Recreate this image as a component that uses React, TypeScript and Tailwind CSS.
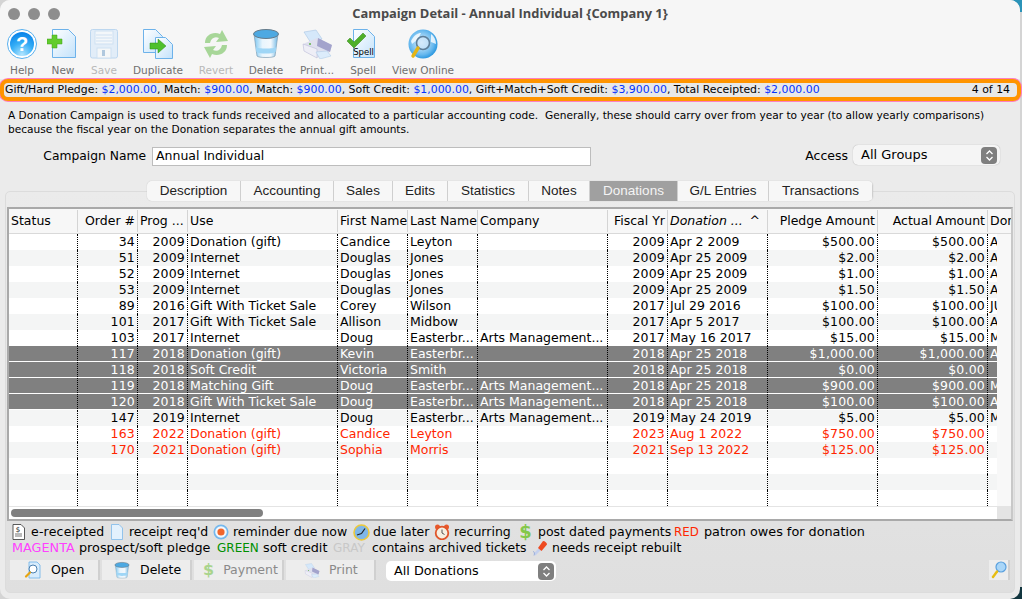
import { ReactNode } from "react";

const sans = "font-['DejaVu_Sans',sans-serif]";

type Row = {
  order: string;
  prog: string;
  use: string;
  first: string;
  last: string;
  company: string;
  fiscal: string;
  date: string;
  pledge: string;
  actual: string;
  don: string;
  selected?: boolean;
  red?: boolean;
};

const arts = "Arts Management...";

const rows: Row[] = [
  { order: "34", prog: "2009", use: "Donation (gift)", first: "Candice", last: "Leyton", company: "", fiscal: "2009", date: "Apr 2 2009", pledge: "$500.00", actual: "$500.00", don: "A" },
  { order: "51", prog: "2009", use: "Internet", first: "Douglas", last: "Jones", company: "", fiscal: "2009", date: "Apr 25 2009", pledge: "$2.00", actual: "$2.00", don: "A" },
  { order: "52", prog: "2009", use: "Internet", first: "Douglas", last: "Jones", company: "", fiscal: "2009", date: "Apr 25 2009", pledge: "$1.00", actual: "$1.00", don: "A" },
  { order: "53", prog: "2009", use: "Internet", first: "Douglas", last: "Jones", company: "", fiscal: "2009", date: "Apr 25 2009", pledge: "$1.50", actual: "$1.50", don: "A" },
  { order: "89", prog: "2016", use: "Gift With Ticket Sale", first: "Corey", last: "Wilson", company: "", fiscal: "2017", date: "Jul 29 2016", pledge: "$100.00", actual: "$100.00", don: "JU" },
  { order: "101", prog: "2017", use: "Gift With Ticket Sale", first: "Allison", last: "Midbow", company: "", fiscal: "2017", date: "Apr 5 2017", pledge: "$100.00", actual: "$100.00", don: "A" },
  { order: "103", prog: "2017", use: "Internet", first: "Doug", last: "Easterbr...", company: arts, fiscal: "2017", date: "May 16 2017", pledge: "$15.00", actual: "$15.00", don: "M" },
  { order: "117", prog: "2018", use: "Donation (gift)", first: "Kevin", last: "Easterbr...", company: "", fiscal: "2018", date: "Apr 25 2018", pledge: "$1,000.00", actual: "$1,000.00", don: "A", selected: true },
  { order: "118", prog: "2018", use: "Soft Credit", first: "Victoria", last: "Smith", company: "", fiscal: "2018", date: "Apr 25 2018", pledge: "$0.00", actual: "$0.00", don: "", selected: true },
  { order: "119", prog: "2018", use: "Matching Gift", first: "Doug", last: "Easterbr...", company: arts, fiscal: "2018", date: "Apr 25 2018", pledge: "$900.00", actual: "$900.00", don: "M", selected: true },
  { order: "120", prog: "2018", use: "Gift With Ticket Sale", first: "Doug", last: "Easterbr...", company: arts, fiscal: "2018", date: "Apr 25 2018", pledge: "$100.00", actual: "$100.00", don: "A", selected: true },
  { order: "147", prog: "2019", use: "Internet", first: "Doug", last: "Easterbr...", company: arts, fiscal: "2019", date: "May 24 2019", pledge: "$5.00", actual: "$5.00", don: "M" },
  { order: "163", prog: "2022", use: "Donation (gift)", first: "Candice", last: "Leyton", company: "", fiscal: "2023", date: "Aug 1 2022", pledge: "$750.00", actual: "$750.00", don: "", red: true },
  { order: "170", prog: "2021", use: "Donation (gift)", first: "Sophia", last: "Morris", company: "", fiscal: "2021", date: "Sep 13 2022", pledge: "$125.00", actual: "$125.00", don: "", red: true },
];

function Cell({ w, right, children, last }: { w: string; right?: boolean; children?: ReactNode; last?: boolean }) {
  return (
    <div
      className={`${w} h-full shrink-0 overflow-hidden whitespace-nowrap ${last ? "pl-[2px]" : "pl-[2px] pr-[2px]"} ${
        right ? "text-right tracking-[0.2px]" : "text-left"
      } ${last ? "" : "border-r border-dotted border-black"}`}
    >
      {children}
    </div>
  );
}

function HeadCell({ w, right, children, italic }: { w: string; right?: boolean; children?: ReactNode; italic?: boolean }) {
  return (
    <div
      className={`${w} h-[22px] shrink-0 overflow-hidden whitespace-nowrap border-r border-[#d4d4d4] px-[2px] leading-[22px] ${right ? "text-right" : ""} ${
        italic ? "italic" : ""
      }`}
    >
      {children}
    </div>
  );
}

function TableRow({ row, index }: { row?: Row; index: number }) {
  const tint = index % 2 === 1;
  let color = tint ? "bg-[#f4f5f5] text-black" : "bg-white text-black";
  if (row?.selected) color = "bg-[#808080] text-white border-b border-white";
  if (row?.red) color = `${tint ? "bg-[#f4f5f5]" : "bg-white"} text-[#ff2600]`;
  return (
    <div className={`flex h-4 leading-[16px] ${color}`}>
      <Cell w="w-[69px]" />
      <Cell w="w-[60px]" right>{row?.order}</Cell>
      <Cell w="w-[50px]" right>{row?.prog}</Cell>
      <Cell w="w-[150px]">{row?.use}</Cell>
      <Cell w="w-[70px]">{row?.first}</Cell>
      <Cell w="w-[70px]">{row?.last}</Cell>
      <Cell w="w-[130px]">{row?.company}</Cell>
      <Cell w="w-[60px]" right>{row?.fiscal}</Cell>
      <Cell w="w-[100px]">{row?.date}</Cell>
      <Cell w="w-[110px]" right>{row?.pledge}</Cell>
      <Cell w="w-[110px]" right>{row?.actual}</Cell>
      <Cell w="w-[9px]" last>{row?.don}</Cell>
    </div>
  );
}

function HelpIcon() {
  return (
    <svg width="32" height="32" viewBox="0 0 32 32">
      <defs>
        <radialGradient id="hb" cx="50%" cy="95%" r="90%">
          <stop offset="0" stopColor="#b4e6ff" />
          <stop offset="0.55" stopColor="#35aef6" />
          <stop offset="1" stopColor="#0c86ea" />
        </radialGradient>
      </defs>
      <circle cx="16" cy="17" r="14.500" fill="#fff" stroke="#58b0ee" strokeWidth="1" />
      <circle cx="16" cy="17" r="12" fill="url(#hb)" />
      <text x="16" y="24" textAnchor="middle" fontSize="20" fontWeight="700" fill="#fff" fontFamily="Liberation Sans">?</text>
    </svg>
  );
}

function DocShape({ x = 0, y = 0, w = 20, h = 30 }: { x?: number; y?: number; w?: number; h?: number }) {
  return (
    <path
      d={`M${x + 0.5} ${y + 0.5}h${w - 7}l7 7v${h - 8}h-${w}z`}
      fill="url(#docfill)"
      stroke="#6db2ea"
      strokeWidth="1"
    />
  );
}

function DocDefs() {
  return (
    <defs>
      <linearGradient id="docfill" x1="0" y1="0" x2="1" y2="1">
        <stop offset="0" stopColor="#ffffff" />
        <stop offset="1" stopColor="#c3e2fb" />
      </linearGradient>
    </defs>
  );
}

function NewIcon() {
  return (
    <svg width="32" height="32" viewBox="0 0 32 32">
      <DocDefs />
      <DocShape x={5} y={2} w={23} h={29} />
      <path d="M5 8h5v4h5v5h-5v4H5v-4H0v-5h5z" fill="#62cc2e" stroke="#3d9e1b" strokeWidth="0.5" />
    </svg>
  );
}

function SaveIcon() {
  return (
    <svg width="32" height="32" viewBox="0 0 32 32" opacity="0.5">
      <rect x="2.500" y="2.500" width="27" height="28.500" rx="2" fill="#cfe5fb" stroke="#86b9ea" />
      <rect x="7" y="4" width="18" height="13" fill="#f2f8fe" stroke="#a9cdef" />
      <path d="M8 8h16M8 11h16M8 14h16" stroke="#a9cdef" />
      <rect x="9" y="21" width="14" height="10" fill="#f5f8fb" stroke="#a9cdef" />
      <rect x="14" y="23" width="3" height="6" fill="#6d9bc7" />
    </svg>
  );
}

function DuplicateIcon() {
  return (
    <svg width="32" height="32" viewBox="0 0 32 32">
      <DocDefs />
      <DocShape x={1} y={2} w={19} h={24} />
      <DocShape x={13} y={10} w={17} h={22} />
      <path d="M8 16h8v-4l8 7-8 7v-4H8z" fill="#4fc02d" stroke="#2f8f1b" strokeWidth="0.5" />
    </svg>
  );
}

function RevertIcon() {
  return (
    <svg width="32" height="32" viewBox="0 0 32 32" opacity="0.55">
      <path d="M5 16C5 8 13 4 20 7l2-4 6 11-12 1 3-4c-4-2-8 0-9 5z" fill="#67bd4c" />
      <path d="M27 18c0 8-8 12-15 9l-2 4-6-11 12-1-3 4c4 2 8 0 9-5z" fill="#67bd4c" />
    </svg>
  );
}

function BucketIcon({ size = 32 }: { size?: number }) {
  return (
    <svg width={size} height={size} viewBox="0 0 32 32">
      <defs>
        <linearGradient id="bk" x1="0" y1="0" x2="1" y2="0">
          <stop offset="0" stopColor="#7cc7f2" />
          <stop offset="0.35" stopColor="#e8f5fd" />
          <stop offset="0.7" stopColor="#f3f8fc" />
          <stop offset="1" stopColor="#6eb8e6" />
        </linearGradient>
      </defs>
      <path d="M4 7l3 22c1 2 17 2 18 0l3-22z" fill="url(#bk)" stroke="#7f9db3" strokeWidth="0.7" />
      <ellipse cx="16" cy="7" rx="12.500" ry="4.500" fill="#4da9e2" stroke="#667a88" strokeWidth="1" />
      <path d="M5.500 20c3 2 18 2 21 0l-1 5c-3 2-16 2-19 0z" fill="#9fd6f6" />
    </svg>
  );
}

function PrintIcon({ size = 32 }: { size?: number }) {
  return (
    <svg width={size} height={size} viewBox="0 0 32 32">
      <path d="M3 5l12-2 6 9-11 4z" fill="#d5e8fa" stroke="#a9c6e4" strokeWidth="0.6" />
      <path d="M2 17l14-6 15 7-2 7-13 6-13-7z" fill="#dfe0ee" />
      <path d="M17 11l14 7-2 7-13-6z" fill="#a3a3cc" />
      <path d="M2 17l14 5v9l-13-7z" fill="#eeeef6" stroke="#b5b5d2" strokeWidth="0.5" />
      <path d="M15 25l11-1 4 5-11 3z" fill="#dcecfb" stroke="#a9c6e4" strokeWidth="0.5" />
      <circle cx="9" cy="17" r="1" fill="#62b34a" />
    </svg>
  );
}

function SpellIcon() {
  return (
    <svg width="32" height="32" viewBox="0 0 32 32">
      <DocDefs />
      <DocShape x={6} y={2} w={21} h={29} />
      <text x="16.500" y="28" textAnchor="middle" fontSize="8.500" fill="#000" fontFamily="DejaVu Sans">Spell</text>
      <path d="M0 14l3-3 4 4 9-9 3 3-12 12z" fill="#4fb02a" stroke="#2f7f16" strokeWidth="0.5" />
    </svg>
  );
}

function GlobeIcon() {
  return (
    <svg width="32" height="32" viewBox="0 0 32 32">
      <defs>
        <radialGradient id="gl" cx="45%" cy="45%" r="60%">
          <stop offset="0" stopColor="#e8f5fe" />
          <stop offset="0.7" stopColor="#66b8ee" />
          <stop offset="1" stopColor="#1b8fdc" />
        </radialGradient>
      </defs>
      <circle cx="16" cy="17" r="14.500" fill="url(#gl)" />
      <path d="M4 14c3-6 7-8 10-8l-3 6-6 5zM24 7c3 2 5 6 5 10l-5-2z" fill="#fff" opacity="0.8" />
      <circle cx="16" cy="16" r="6.500" fill="#cde6fa" fillOpacity="0.7" stroke="#5e7e98" strokeWidth="1.600" />
      <path d="M11 21L6 29" stroke="#e4b516" strokeWidth="3.400" strokeLinecap="round" />
    </svg>
  );
}

function LensIcon() {
  return (
    <svg width="16" height="18" viewBox="0 0 16 18">
      <circle cx="10" cy="6" r="5" fill="#a9d6f8" stroke="#5aa0de" strokeWidth="1.200" />
      <path d="M6 10.500L2 16" stroke="#e7bd12" strokeWidth="2.400" strokeLinecap="round" />
    </svg>
  );
}

function OpenIcon() {
  return (
    <svg width="18" height="18" viewBox="0 0 18 18">
      <path d="M5 1h8l3 3v13H5z" fill="#d8ecfc" stroke="#6db2ea" strokeWidth="0.800" />
      <circle cx="9" cy="8" r="4" fill="#fff" stroke="#4a7fb0" strokeWidth="1" />
      <path d="M6 11.500L2 15.500" stroke="#e7a512" strokeWidth="2.200" strokeLinecap="round" />
    </svg>
  );
}

function DollarMark({ muted, size }: { muted?: boolean; size: string }) {
  return <span className={`${size} font-bold leading-none ${muted ? "text-[#a9d48c]" : "text-[#84c84a]"}`}>$</span>;
}

function EReceiptIcon() {
  return (
    <svg width="13" height="16" viewBox="0 0 13 16">
      <path d="M1 .5h8l3.500 3.500v11.500H1z" fill="#fff" stroke="#333" strokeWidth="0.800" />
      <path d="M3 10h7M3 12h7" stroke="#777" />
      <text x="6" y="8" textAnchor="middle" fontSize="7" fill="#222" fontFamily="DejaVu Sans">$</text>
    </svg>
  );
}

function BlankDocIcon() {
  return (
    <svg width="12" height="16" viewBox="0 0 12 16">
      <path d="M.5.500h7.500l3.500 3.500v11.500H.5z" fill="#e3f1fd" stroke="#7db9ea" strokeWidth="0.800" />
    </svg>
  );
}

function ReminderIcon() {
  return (
    <svg width="16" height="16" viewBox="0 0 16 16">
      <circle cx="8" cy="8" r="7.500" fill="#74b8ee" />
      <circle cx="8" cy="8" r="5.800" fill="#f2f8fd" />
      <circle cx="8" cy="8" r="3.600" fill="#f1652c" />
    </svg>
  );
}

function DueLaterIcon() {
  return (
    <svg width="17" height="17" viewBox="0 0 17 17">
      <circle cx="8.500" cy="8.500" r="7.500" fill="#7fb7e8" stroke="#ecc93a" strokeWidth="1.600" />
      <path d="M8.500 9.500L12 4.500M8.500 9.500L4 11" stroke="#222" strokeWidth="1.200" />
    </svg>
  );
}

function AlarmIcon() {
  return (
    <svg width="16" height="16" viewBox="0 0 16 16">
      <circle cx="3.500" cy="3" r="2.500" fill="#e8582a" />
      <circle cx="12.500" cy="3" r="2.500" fill="#e8582a" />
      <circle cx="8" cy="9" r="6.300" fill="#f6efe0" stroke="#e0562a" strokeWidth="1.800" />
      <path d="M8 5.500V9l2.500 1.500" stroke="#555" strokeWidth="1" fill="none" />
    </svg>
  );
}

function RebuildIcon() {
  return (
    <svg width="16" height="17" viewBox="0 0 16 17">
      <path d="M7.500 9.500L3 14" stroke="#c4d0ee" strokeWidth="2.600" strokeLinecap="round" />
      <path d="M1 11.500c1.500 0 2 2 1 4" stroke="#9fb2dc" strokeWidth="1" fill="none" />
      <path d="M11 1c2 0 4 2 4 3.500L9.500 11 6 8z" fill="#ee4a20" />
    </svg>
  );
}

function ToolItem({ w, label, muted, children }: { w: string; label: string; muted?: boolean; children: ReactNode }) {
  return (
    <div className={`${w} flex shrink-0 flex-col items-center`}>
      <div className="flex h-[32px] items-center justify-center">{children}</div>
      <span className={`mt-[5px] whitespace-nowrap text-[10.5px] leading-[13px] ${muted ? "text-[#b8b8b8]" : "text-[#707070]"}`}>{label}</span>
    </div>
  );
}

function Money({ children }: { children: ReactNode }) {
  return <span className="text-[#0433ff]">{children}</span>;
}

function Stepper() {
  return (
    <span className="flex h-[17px] w-[16px] items-center justify-center rounded-[4px] bg-[#7f7f7f]">
      <svg width="9" height="13" viewBox="0 0 9 13" fill="none" stroke="#fff" strokeWidth="1.300">
        <path d="M1.500 5l3-3 3 3M1.500 8l3 3 3-3" />
      </svg>
    </span>
  );
}

function Tab({ w, active, children }: { w: string; active?: boolean; children: ReactNode }) {
  return (
    <div
      className={`${w} flex h-[20px] items-center justify-center border-r border-[#cfcfcf] font-['Liberation_Sans',sans-serif] text-[13.5px] ${
        active ? "bg-[#a0a0a0] text-[#f4f4f4]" : "bg-[#f7f7f7] text-[#222]"
      }`}
    >
      {children}
    </div>
  );
}

function FootButton({ pad, icon, label, muted }: { pad: string; icon: ReactNode; label: string; muted?: boolean }) {
  return (
    <div className={`flex h-5 w-[90px] items-center ${pad} gap-[9px] border-r-2 border-[#d0d0d0] bg-[#ededed] ${muted ? "text-[#8a8a8a]" : "text-black"}`}>
      {icon}
      <span className="pt-[1px]">{label}</span>
    </div>
  );
}

export default function App() {
  return (
    <div className={`relative h-[599px] w-[1022px] overflow-hidden bg-[#d4d4d4] ${sans}`}>
      <div className="absolute right-0 top-0 h-3 w-3 bg-[#2b93b8]" />
      <div className="absolute bottom-0 right-0 h-3 w-3 bg-[#12363f]" />
      <div className="relative flex h-[599px] w-[1020px] flex-col rounded-[10px] bg-[#ebebeb]">
        {/* title + toolbar */}
        <div className="h-[79px] shrink-0 rounded-t-[10px] bg-[#f6f6f6]">
          <div className="relative flex h-[27px] items-center justify-center">
            <div className="absolute left-[8px] top-[8px] flex gap-2">
              <span className="h-3 w-3 rounded-full bg-[#8e8e8e]" />
              <span className="h-3 w-3 rounded-full bg-[#8e8e8e]" />
              <span className="h-3 w-3 rounded-full bg-[#8e8e8e]" />
            </div>
            <span className="font-['Open_Sans',sans-serif] text-[12.900px] font-bold text-[#4a4a4a]">Campaign Detail - Annual Individual {"{Company 1}"}</span>
          </div>
          <div className="flex pl-[4px]">
            <ToolItem w="w-[36px]" label="Help"><HelpIcon /></ToolItem>
            <ToolItem w="w-[46px]" label="New"><NewIcon /></ToolItem>
            <ToolItem w="w-[36px]" label="Save" muted><SaveIcon /></ToolItem>
            <ToolItem w="w-[72px]" label="Duplicate"><DuplicateIcon /></ToolItem>
            <ToolItem w="w-[44px]" label="Revert" muted><RevertIcon /></ToolItem>
            <ToolItem w="w-[56px]" label="Delete"><BucketIcon /></ToolItem>
            <ToolItem w="w-[46px]" label="Print..."><PrintIcon /></ToolItem>
            <ToolItem w="w-[46px]" label="Spell"><SpellIcon /></ToolItem>
            <ToolItem w="w-[74px]" label="View Online"><GlobeIcon /></ToolItem>
          </div>
        </div>

        {/* highlighted totals bar */}
        <div className="flex h-[22px] w-[1021px] shrink-0 items-center justify-between whitespace-nowrap rounded-[8px] border-[4px] border-[#ff9400] bg-[#e8e8e8] pl-[1px] pr-[7px] pt-[1px] text-[10.9px] text-black shadow-[0_0_0_1px_#ff80c0]">
          <span>
            Gift/Hard Pledge: <Money>$2,000.00</Money>, Match: <Money>$900.00</Money>, Match: <Money>$900.00</Money>, Soft Credit: <Money>$1,000.00</Money>, Gift+Match+Soft Credit: <Money>$3,900.00</Money>, Total Receipted: <Money>$2,000.00</Money>
          </span>
          <span>4 of 14</span>
        </div>

        {/* description */}
        <p className="mt-[7px] shrink-0 whitespace-nowrap px-[8px] text-[10.6px] leading-[14px] text-black">
          A Donation Campaign is used to track funds received and allocated to a particular accounting code.&nbsp; Generally, these should carry over from year to year (to allow yearly comparisons)
          <br />
          because the fiscal year on the Donation separates the annual gift amounts.
        </p>

        {/* name + access */}
        <div className="mt-[9px] flex h-[22px] shrink-0 items-center text-[12.5px] text-black">
          <span className="w-[146px] text-right text-[12.300px]">Campaign Name</span>
          <div className="ml-[6px] flex h-[19px] w-[439px] items-center border border-[#bdbdbd] bg-white px-[3px]">Annual Individual</div>
          <span className="ml-auto">Access</span>
          <div className="-mt-[2px] ml-[5px] mr-[20px] flex h-[20px] w-[147px] items-center justify-between rounded-[5px] bg-[#f5f5f5] pl-[8px] pr-[3px] text-[13px] shadow-[0_0_1px_#999]">
            <span>All Groups</span>
            <Stepper />
          </div>
        </div>

        {/* tabbed panel */}
        <div className="relative mb-[6px] ml-[5px] mt-[24px] flex min-h-0 w-[1010px] flex-1 flex-col rounded-[5px] border border-[#dcdcdc] bg-[linear-gradient(180deg,#ebebeb,#dfdfdf)]">
          <div className="absolute left-[141px] top-[-11px] flex overflow-hidden rounded-[5px] shadow-[0_0_1px_#aaa]">
            <Tab w="w-[94px]">Description</Tab>
            <Tab w="w-[93px]">Accounting</Tab>
            <Tab w="w-[59px]">Sales</Tab>
            <Tab w="w-[55px]">Edits</Tab>
            <Tab w="w-[81px]">Statistics</Tab>
            <Tab w="w-[61px]">Notes</Tab>
            <Tab w="w-[88px]" active>Donations</Tab>
            <Tab w="w-[91px]">G/L Entries</Tab>
            <Tab w="w-[104px]">Transactions</Tab>
          </div>

          {/* table */}
          <div className="ml-[1px] mt-[15px] h-[314px] w-[1006px] shrink-0 overflow-hidden border-2 border-[#a9a9a9] border-r-[#c8c8c8] bg-white text-[12.5px] text-black">
            <div className="flex h-[25px] items-center border-b border-[#d9d9d9] bg-[#f7f7f7]">
              <HeadCell w="w-[69px]">Status</HeadCell>
              <HeadCell w="w-[60px]" right>Order #</HeadCell>
              <HeadCell w="w-[50px]">Prog ...</HeadCell>
              <HeadCell w="w-[150px]">Use</HeadCell>
              <HeadCell w="w-[70px]">First Name</HeadCell>
              <HeadCell w="w-[70px]">Last Name</HeadCell>
              <HeadCell w="w-[130px]">Company</HeadCell>
              <HeadCell w="w-[60px]" right>Fiscal Yr</HeadCell>
              <HeadCell w="w-[100px]" italic>
                <div className="flex justify-between pr-[5px]">
                  <span>Donation ...</span>
                  <span className="not-italic">^</span>
                </div>
              </HeadCell>
              <HeadCell w="w-[110px]" right>Pledge Amount</HeadCell>
              <HeadCell w="w-[110px]" right>Actual Amount</HeadCell>
              <div className="overflow-hidden pl-[2px]">Dor</div>
            </div>
            <div className="flex h-[285px]">
              <div className="w-[988px] shrink-0">
                {Array.from({ length: 17 }).map((_, i) => (
                  <TableRow key={i} row={rows[i]} index={i} />
                ))}
                <div className="flex h-[13px] items-center border-t border-[#e4e4e4] pl-[2px]">
                  <div className="h-2 w-[252px] rounded-full bg-[#808080]" />
                </div>
              </div>
              <div className="flex flex-1 flex-col">
                <div className="h-[272px] bg-[#f8f8f8]" />
                <div className="flex-1 bg-[#e4e4e4]" />
              </div>
            </div>
          </div>

          {/* legend */}
          <div className="mt-[3px] whitespace-nowrap pl-[6px] text-[12.5px] leading-[16px] text-black">
            <div className="flex h-4 items-center">
              <EReceiptIcon />
              <span className="ml-[6px] w-[73px] tracking-[0.2px]">e-receipted</span>
              <span className="ml-[7px]"><BlankDocIcon /></span>
              <span className="ml-[6px] w-[78px]">receipt req'd</span>
              <span className="ml-[6px]"><ReminderIcon /></span>
              <span className="ml-[4px] w-[115px]">reminder due now</span>
              <span className="ml-[5px]"><DueLaterIcon /></span>
              <span className="ml-[3px] w-[56px]">due later</span>
              <span className="ml-[5px]"><AlarmIcon /></span>
              <span className="ml-[4px] w-[57px]">recurring</span>
              <span className="ml-[9px] flex w-[11px] justify-center"><DollarMark size="text-[18px]" /></span>
              <span className="ml-[7px] w-[131px]">post dated payments</span>
              <span className="ml-[5px] w-[24px] text-[11.800px] text-[#ff2600]">RED</span>
              <span className="ml-[6px] text-[12.800px]">patron owes for donation</span>
            </div>
            <div className="flex h-4 items-center">
              <span className="w-[62px] text-[12.800px] text-[#ff40ff]">MAGENTA</span>
              <span className="ml-[5px] w-[133px] text-[12.800px]">prospect/soft pledge</span>
              <span className="ml-[5px] w-[41px] text-[12px] text-[#008f00]">GREEN</span>
              <span className="ml-[5px] w-[64px] text-[12.800px]">soft credit</span>
              <span className="ml-[6px] w-[33px] text-[12px] text-[#c8c8c8]">GRAY</span>
              <span className="ml-[6px] w-[154px] text-[12.400px]">contains archived tickets</span>
              <span className="ml-[6px]"><RebuildIcon /></span>
              <span className="ml-[4px]">needs receipt rebuilt</span>
            </div>
          </div>

          {/* footer buttons */}
          <div className="ml-[4px] mt-[4px] flex items-start gap-[2px] text-[12.500px]">
            <FootButton pad="pl-[14px]" icon={<OpenIcon />} label="Open" />
            <FootButton pad="pl-[11px]" icon={<BucketIcon size={18} />} label="Delete" />
            <FootButton pad="pl-[9px]" icon={<DollarMark muted size="text-[16px]" />} label="Payment" muted />
            <FootButton pad="pl-[18px]" icon={<PrintIcon size={16} />} label="Print" muted />
            <div className="ml-[8px] mt-[1px] flex h-5 w-[170px] items-center justify-between rounded-[5px] bg-white pl-[8px] pr-[2px] text-[12.800px]">
              <span>All Donations</span>
              <Stepper />
            </div>
            <div className="ml-auto mr-[4px] flex h-5 w-[21px] items-center justify-center border-r-2 border-[#d0d0d0] bg-[#ededed]">
              <LensIcon />
            </div>
          </div>
        </div>
      </div>
    </div>
  );
}
